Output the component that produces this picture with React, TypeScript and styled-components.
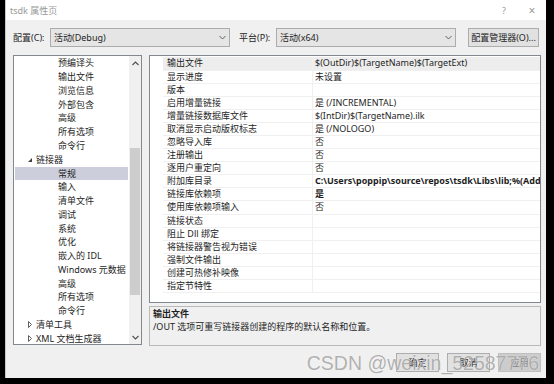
import React from "react";
import styled, { createGlobalStyle } from "styled-components";

const Global = createGlobalStyle`
  html, body { margin: 0; padding: 0; background: #000; }
  body { font-family: "Noto Sans", "Noto Sans CJK SC", sans-serif; }
  * { box-sizing: border-box; }
`;

const FONT = `"Noto Sans", "Noto Sans CJK SC", sans-serif`;

const Window = styled.div`
  position: relative;
  width: 541px;
  height: 378px;
  margin-left: 5px;
  background: #f0f0f0;
  display: flex;
  flex-direction: column;
  overflow: hidden;
  font-family: ${FONT};
  font-size: 9px;
  color: #1e1e1e;
  border-left: 1px solid #c9c9c9;
`;

const TitleBar = styled.div`
  height: 20px;
  flex: none;
  background: #ffffff;
  display: flex;
  align-items: center;
  padding-left: 4px;
  color: #999999;
`;

const TitleText = styled.div`
  flex: 1;
`;

const TitleBtn = styled.div<{ $size?: number }>`
  width: 28px;
  text-align: center;
  color: #999999;
  font-size: ${(p) => p.$size ?? 10}px;
`;

const ConfigRow = styled.div`
  margin-top: 8px;
  height: 19px;
  flex: none;
  padding-left: 7px;
  display: flex;
  align-items: center;
`;

const Label = styled.div<{ $w: number; $ml?: number }>`
  width: ${(p) => p.$w}px;
  margin-left: ${(p) => p.$ml ?? 0}px;
  white-space: nowrap;
`;

const Select = styled.div`
  width: 180px;
  height: 19px;
  background: #e5e5e5;
  border: 1px solid #acacac;
  display: flex;
  align-items: center;
  padding: 0 0 0 3px;
`;

const SelectText = styled.div`
  flex: 1;
  white-space: nowrap;
`;

const Chevron = styled.svg`
  margin-right: 3px;
`;

const Button = styled.div<{ $w: number; $ml?: number; $disabled?: boolean }>`
  width: ${(p) => p.$w}px;
  height: 19px;
  margin-left: ${(p) => p.$ml ?? 0}px;
  background: ${(p) => (p.$disabled ? "#cccccc" : "#e1e1e1")};
  border: 1px solid ${(p) => (p.$disabled ? "#bfbfbf" : "#adadad")};
  color: ${(p) => (p.$disabled ? "#838383" : "#1e1e1e")};
  display: flex;
  align-items: center;
  justify-content: center;
  white-space: nowrap;
`;

const Main = styled.div`
  margin-top: 8px;
  height: 291px;
  flex: none;
  padding-left: 7px;
  display: flex;
  gap: 7px;
  align-items: flex-start;
`;

const Tree = styled.div`
  width: 129px;
  height: 290px;
  border: 1px solid #828790;
  background: #fff;
  display: flex;
`;

const TreeList = styled.div`
  flex: 1;
  overflow: hidden;
  padding-top: 0.4px;
`;

const TreeRow = styled.div<{ $indent: number; $selected?: boolean }>`
  height: 13.78px;
  line-height: 13.78px;
  margin: 0 1px 0 1px;
  padding-left: ${(p) => p.$indent}px;
  background: ${(p) => (p.$selected ? "#cccedb" : "transparent")};
  white-space: nowrap;
  display: flex;
  align-items: center;
  color: #1e1e1e;
`;

const Expander = styled.svg`
  width: 9px;
  flex: none;
`;

const Scrollbar = styled.div`
  width: 12px;
  background: #f0f0f0;
  display: flex;
  flex-direction: column;
`;

const ScrollArrow = styled.div`
  height: 14px;
  display: flex;
  align-items: center;
  justify-content: center;
`;

const ScrollTrack = styled.div`
  flex: 1;
`;

const Thumb = styled.div`
  margin: 78px 1px 0 1px;
  height: 147px;
  background: #cdcdcd;
`;

const RightCol = styled.div`
  width: 392px;
  display: flex;
  flex-direction: column;
  gap: 3px;
`;

const Grid = styled.div`
  height: 248px;
  border: 1px solid #828790;
  background: #fff;
  display: flex;
`;

const GridMargin = styled.div`
  width: 13px;
  flex: none;
`;

const GridBody = styled.div`
  flex: 1;
  overflow: hidden;
  padding-top: 1.45px;
`;

const PropRow = styled.div<{ $selected?: boolean }>`
  height: 13.1px;
  display: flex;
  border-bottom: 1px solid #f0f0f0;
  background: ${(p) => (p.$selected ? "#ededed" : "#fff")};
`;

const PropName = styled.div`
  width: 150px;
  flex: none;
  border-right: 1px solid #f0f0f0;
  padding-left: 4px;
  line-height: 12.1px;
  white-space: nowrap;
  overflow: hidden;
`;

const PropValue = styled.div<{ $bold?: boolean }>`
  flex: 1;
  padding-left: 2px;
  line-height: 12.1px;
  white-space: nowrap;
  overflow: hidden;
  font-weight: ${(p) => (p.$bold ? 700 : 400)};
`;

const Desc = styled.div`
  height: 40px;
  border: 1px solid #b9b9b9;
  background: #f0f0f0;
  padding: 0 0 0 3px;
`;

const DescTitle = styled.div`
  font-weight: 700;
  line-height: 13px;
`;

const DescText = styled.div`
  line-height: 13px;
`;

const ButtonRow = styled.div`
  margin-top: 7px;
  height: 19px;
  flex: none;
  display: flex;
  justify-content: flex-end;
  gap: 8px;
  padding-right: 5px;
`;

const Watermark = styled.div`
  position: absolute;
  right: 7px;
  bottom: 3px;
  font-family: "Liberation Sans", sans-serif;
  font-size: 19.5px;
  font-weight: 400;
  color: rgba(125, 125, 125, 0.6);
  text-shadow: 0 0 1px rgba(255, 255, 255, 0.9);
  white-space: nowrap;
  pointer-events: none;
`;

const ChevronDown = () => (
  <Chevron width="7" height="5" viewBox="0 0 7 5">
    <polyline points="0.5,1 3.5,4 6.5,1" fill="none" stroke="#606060" strokeWidth="1" />
  </Chevron>
);

type TreeItem = { label: string; indent: number; kind?: "open" | "closed"; selected?: boolean };

const treeItems: TreeItem[] = [
  { label: "预编译头", indent: 43 },
  { label: "输出文件", indent: 43 },
  { label: "浏览信息", indent: 43 },
  { label: "外部包含", indent: 43 },
  { label: "高级", indent: 43 },
  { label: "所有选项", indent: 43 },
  { label: "命令行", indent: 43 },
  { label: "链接器", indent: 21, kind: "open" },
  { label: "常规", indent: 43, selected: true },
  { label: "输入", indent: 43 },
  { label: "清单文件", indent: 43 },
  { label: "调试", indent: 43 },
  { label: "系统", indent: 43 },
  { label: "优化", indent: 43 },
  { label: "嵌入的 IDL", indent: 43 },
  { label: "Windows 元数据", indent: 43 },
  { label: "高级", indent: 43 },
  { label: "所有选项", indent: 43 },
  { label: "命令行", indent: 43 },
  { label: "清单工具", indent: 21, kind: "closed" },
  { label: "XML 文档生成器", indent: 21, kind: "closed" },
];

type Prop = { name: string; value: string; bold?: boolean };

const props: Prop[] = [
  { name: "输出文件", value: "$(OutDir)$(TargetName)$(TargetExt)" },
  { name: "显示进度", value: "未设置" },
  { name: "版本", value: "" },
  { name: "启用增量链接", value: "是 (/INCREMENTAL)" },
  { name: "增量链接数据库文件", value: "$(IntDir)$(TargetName).ilk" },
  { name: "取消显示启动版权标志", value: "是 (/NOLOGO)" },
  { name: "忽略导入库", value: "否" },
  { name: "注册输出", value: "否" },
  { name: "逐用户重定向", value: "否" },
  {
    name: "附加库目录",
    value: "C:\\Users\\poppip\\source\\repos\\tsdk\\Libs\\lib;%(AdditionalLibraryDirectories)",
    bold: true,
  },
  { name: "链接库依赖项", value: "是", bold: true },
  { name: "使用库依赖项输入", value: "否" },
  { name: "链接状态", value: "" },
  { name: "阻止 Dll 绑定", value: "" },
  { name: "将链接器警告视为错误", value: "" },
  { name: "强制文件输出", value: "" },
  { name: "创建可热修补映像", value: "" },
  { name: "指定节特性", value: "" },
];

const ExpanderIcon = ({ kind }: { kind: "open" | "closed" }) =>
  kind === "open" ? (
    <Expander height="6" viewBox="0 0 9 6">
      <polygon points="1,5 5,5 5,1" fill="#404040" />
    </Expander>
  ) : (
    <Expander height="7" viewBox="0 0 9 7">
      <polygon points="1.5,0.5 4.5,3.5 1.5,6.5" fill="none" stroke="#606060" strokeWidth="1" />
    </Expander>
  );

export default function App() {
  return (
    <>
      <Global />
      <Window>
        <TitleBar>
          <TitleText>tsdk 属性页</TitleText>
          <TitleBtn $size={9}>?</TitleBtn>
          <TitleBtn $size={12}>×</TitleBtn>
        </TitleBar>

        <ConfigRow>
          <Label $w={37}>配置(C):</Label>
          <Select>
            <SelectText>活动(Debug)</SelectText>
            <ChevronDown />
          </Select>
          <Label $w={37} $ml={9}>平台(P):</Label>
          <Select>
            <SelectText>活动(x64)</SelectText>
            <ChevronDown />
          </Select>
          <Button $w={71} $ml={12}>配置管理器(O)...</Button>
        </ConfigRow>

        <Main>
          <Tree>
            <TreeList>
              {treeItems.map((it, i) => (
                <TreeRow key={i} $indent={it.kind ? it.indent - 9 : it.indent} $selected={it.selected}>
                  {it.kind && <ExpanderIcon kind={it.kind} />}
                  {it.label}
                </TreeRow>
              ))}
            </TreeList>
            <Scrollbar>
              <ScrollArrow>
                <svg width="7" height="5" viewBox="0 0 7 5">
                  <polyline points="0.5,4 3.5,1 6.5,4" fill="none" stroke="#505050" strokeWidth="1.1" />
                </svg>
              </ScrollArrow>
              <ScrollTrack>
                <Thumb />
              </ScrollTrack>
              <ScrollArrow>
                <svg width="7" height="5" viewBox="0 0 7 5">
                  <polyline points="0.5,1 3.5,4 6.5,1" fill="none" stroke="#505050" strokeWidth="1.1" />
                </svg>
              </ScrollArrow>
            </Scrollbar>
          </Tree>

          <RightCol>
            <Grid>
              <GridMargin />
              <GridBody>
                {props.map((p, i) => (
                  <PropRow key={i} $selected={i === 0}>
                    <PropName>{p.name}</PropName>
                    <PropValue $bold={p.bold}>{p.value}</PropValue>
                  </PropRow>
                ))}
              </GridBody>
            </Grid>
            <Desc>
              <DescTitle>输出文件</DescTitle>
              <DescText>/OUT 选项可重写链接器创建的程序的默认名称和位置。</DescText>
            </Desc>
          </RightCol>
        </Main>

        <ButtonRow>
          <Button $w={43}>确定</Button>
          <Button $w={43}>取消</Button>
          <Button $w={43} $disabled>应用</Button>
        </ButtonRow>

        <Watermark>CSDN @weixin_52587776</Watermark>
      </Window>
    </>
  );
}
